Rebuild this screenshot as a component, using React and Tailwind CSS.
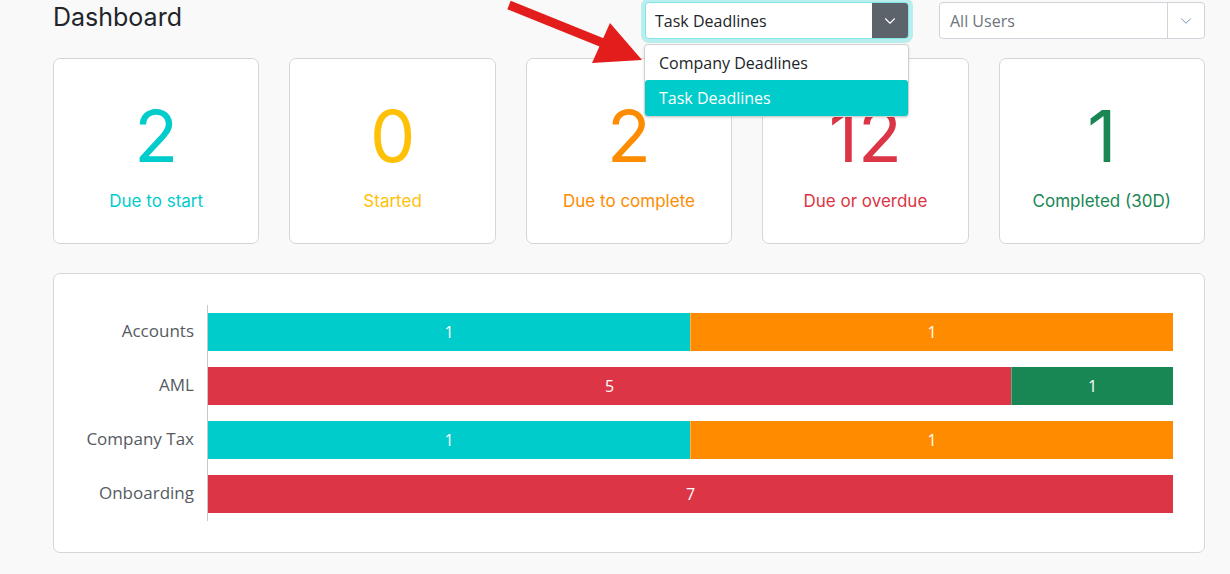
import { ChevronDown } from "lucide-react";

const stats = [
  { value: "2", label: "Due to start", color: "text-[#00cccc]" },
  { value: "0", label: "Started", color: "text-[#ffc107]" },
  { value: "2", label: "Due to complete", color: "text-[#fd8c00]" },
  { value: "12", label: "Due or overdue", color: "text-[#dc3545]" },
  { value: "1", label: "Completed (30D)", color: "text-[#198754]" },
];

const rows = [
  { name: "Accounts", parts: [{ v: 1, c: "bg-[#00cccc]" }, { v: 1, c: "bg-[#ff8c00]" }] },
  { name: "AML", parts: [{ v: 5, c: "bg-[#dc3545]" }, { v: 1, c: "bg-[#198754]" }] },
  { name: "Company Tax", parts: [{ v: 1, c: "bg-[#00cccc]" }, { v: 1, c: "bg-[#ff8c00]" }] },
  { name: "Onboarding", parts: [{ v: 7, c: "bg-[#dc3545]" }] },
];

export default function App() {
  return (
    <div className="relative min-h-[574px] bg-[#f9f9f9] pl-[53px] pr-[25px] font-['Inter',sans-serif] text-[#212529]">
      {/* HEADER */}
      <div className="flex h-[58px] items-start justify-between">
        <h1 className="mt-px text-[25px] leading-8 font-normal">Dashboard</h1>

        <div className="mt-[2px] flex gap-[30px] font-['Open_Sans',sans-serif]">
          {/* type select (open) */}
          <div className="relative">
            <div className="flex h-[37px] w-[264px] items-stretch rounded-[4px] border border-[#80e6e6] bg-white ring-4 ring-[#00cccc]/25">
              <div className="flex flex-1 items-center pl-[9px] text-[16px] text-[#212529]">Task Deadlines</div>
              <div className="flex w-[36px] items-center justify-center rounded-r-[3px] bg-[#5c636a] text-white">
                <ChevronDown size={18} strokeWidth={1.5} />
              </div>
            </div>

            {/* dropdown menu */}
            <div className="absolute left-[-1px] top-[42px] z-10 w-[265px] rounded-[4px] border border-[#d0d0d0] bg-white shadow-sm">
              <div className="flex h-[35px] items-center pl-[14px] text-[16px] text-[#212529]">Company Deadlines</div>
              <div className="flex h-[36px] items-center rounded-[3px] bg-[#00cccc] pl-[14px] text-[16px] text-white">Task Deadlines</div>
            </div>
          </div>

          {/* users select */}
          <div className="flex h-[37px] w-[266px] items-stretch rounded-[4px] border border-[#cfd4da] bg-white">
            <div className="flex flex-1 items-center pl-[10px] text-[16px] text-[#6c757d]">All Users</div>
            <div className="flex w-[37px] items-center justify-center border-l border-[#cfd4da] text-[#6c8cb0]">
              <ChevronDown size={18} strokeWidth={1.25} />
            </div>
          </div>
        </div>
      </div>

      {/* STAT CARDS */}
      <div className="grid grid-cols-5 gap-[30px]">
        {stats.map((s) => (
          <div
            key={s.label}
            className="flex h-[186px] flex-col items-center rounded-[7px] border border-[#d6d6d6] bg-white pt-[41px]"
          >
            <span className={`text-[72px] leading-[72px] font-normal ${s.color}`}>{s.value}</span>
            <span className={`mt-[17px] text-[17px] leading-6 ${s.color}`}>{s.label}</span>
          </div>
        ))}
      </div>

      {/* CHART */}
      <div className="mt-[29px] flex rounded-[7px] border border-[#d6d6d6] bg-white py-[31px] pr-[31px] font-['Open_Sans',sans-serif]">
        <div className="flex w-[153px] flex-col gap-4 py-2 pr-[13px]">
          {rows.map((r) => (
            <div key={r.name} className="flex h-[38px] items-center justify-end pb-[3px] text-[17px] text-[#555b61]">
              {r.name}
            </div>
          ))}
        </div>
        <div className="flex flex-1 flex-col gap-4 border-l border-[#c8c8c8] py-2">
          {rows.map((r) => (
            <div key={r.name} className="flex h-[38px]">
              {r.parts.map((p, i) => (
                <div
                  key={i}
                  style={{ flexGrow: p.v }}
                  className={`flex basis-0 items-center justify-center text-[16px] text-white ${p.c} ${i > 0 ? "border-l border-white/30" : ""}`}
                >
                  {p.v}
                </div>
              ))}
            </div>
          ))}
        </div>
      </div>

      {/* annotation arrow */}
      <svg className="pointer-events-none absolute left-0 top-0 z-20" width="700" height="80" viewBox="0 0 700 80">
        <line x1="509" y1="5" x2="608" y2="45" stroke="#e31c1c" strokeWidth="9" />
        <polygon points="642,60 592,63 610,23" fill="#e31c1c" />
      </svg>
    </div>
  );
}
